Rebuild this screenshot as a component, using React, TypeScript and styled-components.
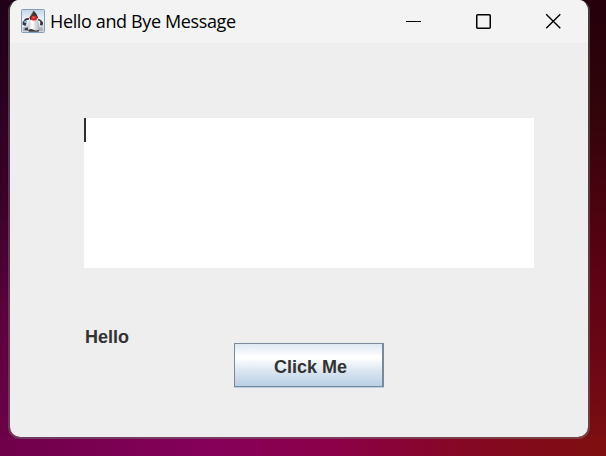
import React from "react";
import styled, { createGlobalStyle } from "styled-components";

const GlobalStyle = createGlobalStyle`
  html, body { margin: 0; padding: 0; overflow: hidden; }
  *, *::before, *::after { box-sizing: border-box; }
`;

const Desktop = styled.div`
  width: 606px;
  height: 456px;
  padding: 0 16px 17px 8px;
  background:
    linear-gradient(90deg, #6f004a 0, #86005a 35%, #8c0048 55%, #860726 75%, #7e0f0f 100%) 0 100% / 100% 19px no-repeat,
    linear-gradient(180deg, #1f0016 0%, #2c001f 22%, #3c002a 45%, #5c003e 70%, #6f004a 100%) 0 0 / 50% 100% no-repeat,
    linear-gradient(180deg, #25000b 0%, #30040a 22%, #48030f 43%, #5c0214 60%, #6c0715 80%, #7e0f0f 100%) 100% 0 / 50% 100% no-repeat;
`;

const Window = styled.main`
  display: flex;
  flex-direction: column;
  width: 582px;
  height: 439px;
  border: 2px solid rgba(115, 115, 115, 0.5);
  border-top: 0;
  border-radius: 11px 11px 12px 12px;
  background: #eeeeee;
  background-clip: padding-box;
  overflow: hidden;
`;

const TitleBar = styled.header`
  display: flex;
  align-items: center;
  flex: none;
  height: 43px;
  padding: 0 0 2px 11px;
  background: #f3f3f3;
`;

const Title = styled.h1`
  flex: 1;
  margin: 0 0 0 5px;
  font: 400 18px/24px "Open Sans", "Noto Sans", sans-serif;
  letter-spacing: -0.37px;
  color: #000;
  white-space: nowrap;
`;

const WindowControl = styled.button`
  display: flex;
  align-items: center;
  justify-content: center;
  width: 70px;
  height: 41px;
  padding: 0;
  border: 0;
  background: transparent;
`;

const Content = styled.section`
  display: flex;
  flex-direction: column;
  flex: 1;
  padding: 75px 54px 0 74px;
`;

const TextArea = styled.div`
  width: 450px;
  height: 150px;
  background: #fff;
`;

const Caret = styled.div`
  width: 2px;
  height: 24px;
  background: #2e2e2e;
`;

const ActionRow = styled.div`
  display: flex;
  align-items: flex-start;
  margin-top: 58px;
`;

const Message = styled.span`
  width: 150px;
  padding-left: 1px;
  font: 700 18px/22px "Liberation Sans", Arial, sans-serif;
  color: #333;
`;

const ActionButton = styled.button`
  width: 150px;
  height: 44px;
  margin-top: 17px;
  padding: 3px 0 0 4px;
  border: 1px solid #7a8a99;
  border-right-width: 2px;
  border-radius: 0;
  background: linear-gradient(180deg, #dde8f3 0%, #fff 30%, #fff 33%, #dbe6f1 64%, #b8cfe5 100%);
  box-shadow: inset 0 0 0 0 #fff, 0 1px 0 #b8cfe5;
  font: 700 18px/22px "Liberation Sans", Arial, sans-serif;
  color: #333;
`;

const DukeIcon = () => (
  <svg width="24" height="24" viewBox="0 0 24 24" aria-hidden="true">
    <defs>
      <linearGradient id="tile" x1="0" y1="0" x2="0" y2="1">
        <stop offset="0" stopColor="#c2d5e8" />
        <stop offset="0.45" stopColor="#f2f3fa" />
        <stop offset="1" stopColor="#cbd3df" />
      </linearGradient>
      <linearGradient id="belly" x1="0" y1="0" x2="1" y2="0">
        <stop offset="0" stopColor="#bcbcc0" />
        <stop offset="0.4" stopColor="#fff" />
        <stop offset="1" stopColor="#b4b4ba" />
      </linearGradient>
    </defs>
    <rect x="0.5" y="0.5" width="23" height="23" rx="1" fill="url(#tile)" stroke="#839fb8" />
    <path d="M2 18.5Q12 15 22 18.5V22H2Z" fill="#9ba1a9" opacity="0.65" />
    <path d="M8 10Q4 9.5 3 13.2" fill="none" stroke="#303236" strokeWidth="1.7" />
    <path d="M17 10.5Q20 11 21 14" fill="none" stroke="#4a4c50" strokeWidth="1.7" />
    <path d="M1.8 12.2L5.6 14.5L4.3 17L1.5 15.5Z" fill="#34383c" />
    <path d="M3 11.5L6 12L5.4 14L3.4 13.7Z" fill="#7fb3d2" />
    <path d="M19.5 12L22.2 13.5L21.4 16.7L19 16Z" fill="#34363b" />
    <path d="M9.2 9Q6.7 14.5 6.2 21Q9 22.5 12 20.8Q15.5 23.2 18.3 20.8Q18.6 14 15.4 8.8Z" fill="url(#belly)" />
    <path d="M4 19L7 18.5L6.8 21.5L3.5 21ZM7 21Q10 19.6 12 20.4Q15 22.5 18.5 20.5L17.5 22.8H8Z" fill="#3b3c3e" />
    <path d="M12.6 1.4L8.4 8.5L9.4 11L15.5 10L17.2 8.7Q15.8 4.5 12.6 1.4Z" fill="#353535" />
    <path d="M12.4 2.5L10 6.7" stroke="#888" strokeWidth="0.8" />
    <ellipse cx="13" cy="9" rx="3" ry="2.6" fill="#df2028" />
    <ellipse cx="12.5" cy="8.3" rx="1.3" ry="0.9" fill="#f76060" />
  </svg>
);

export default function App() {
  return (
    <Desktop>
      <GlobalStyle />
      <Window>
        <TitleBar>
          <DukeIcon />
          <Title>Hello and Bye Message</Title>
          <WindowControl aria-label="Minimize">
            <svg width="16" height="16"><path d="M1 8.5H16" stroke="#000" /></svg>
          </WindowControl>
          <WindowControl aria-label="Maximize">
            <svg width="16" height="16">
              <rect x="1.75" y="1.75" width="13.5" height="13.5" rx="1" fill="none" stroke="#000" strokeWidth="1.5" />
            </svg>
          </WindowControl>
          <WindowControl aria-label="Close">
            <svg width="16" height="16">
              <path d="M1.2 1.2L15.3 15.3M15.3 1.2L1.2 15.3" stroke="#000" strokeWidth="1.4" />
            </svg>
          </WindowControl>
        </TitleBar>
        <Content>
          <TextArea role="textbox"><Caret /></TextArea>
          <ActionRow>
            <Message>Hello</Message>
            <ActionButton>Click Me</ActionButton>
          </ActionRow>
        </Content>
      </Window>
    </Desktop>
  );
}
